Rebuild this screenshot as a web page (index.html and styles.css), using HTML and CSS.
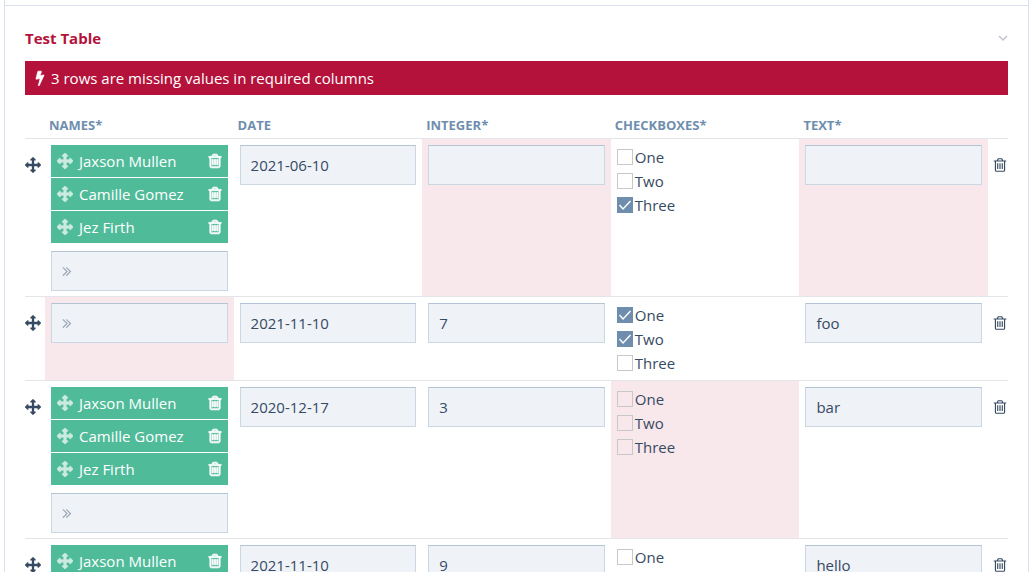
FILE: index.html
```html
<!DOCTYPE html>
<html lang="en">
<head>
    <meta charset="UTF-8">
    <meta name="viewport" content="width=device-width, initial-scale=1.0">
    <title>Test Table</title>
    <link rel="stylesheet" href="styles.css">
</head>
<body>
    <!-- Icon sprite -->
    <svg class="sprite" aria-hidden="true">
        <symbol id="move" viewBox="0 0 1792 1792"><path d="M1792 896q0 26-19 45l-256 256q-19 19-45 19t-45-19-19-45v-128h-384v384h128q26 0 45 19t19 45-19 45l-256 256q-19 19-45 19t-45-19l-256-256q-19-19-19-45t19-45 45-19h128v-384h-384v128q0 26-19 45t-45 19-45-19l-256-256q-19-19-19-45t19-45l256-256q19-19 45-19t45 19 19 45v128h384v-384h-128q-26 0-45-19t-19-45 19-45l256-256q19-19 45-19t45 19l256 256q19 19 19 45t-19 45-45 19h-128v384h384v-128q0-26 19-45t45-19 45 19l256 256q19 19 19 45z"/></symbol>
        <symbol id="trash" viewBox="0 0 1792 1792"><path d="M704 736v576q0 14-9 23t-23 9h-64q-14 0-23-9t-9-23v-576q0-14 9-23t23-9h64q14 0 23 9t9 23zm256 0v576q0 14-9 23t-23 9h-64q-14 0-23-9t-9-23v-576q0-14 9-23t23-9h64q14 0 23 9t9 23zm256 0v576q0 14-9 23t-23 9h-64q-14 0-23-9t-9-23v-576q0-14 9-23t23-9h64q14 0 23 9t9 23zm128 724v-948h-896v948q0 22 7 40.5t14.5 27 10.5 8.5h832q3 0 10.5-8.5t14.5-27 7-40.5zm-672-1076h448l-48-117q-7-9-17-11h-317q-10 2-17 11zm928 32v64q0 14-9 23t-23 9h-96v948q0 83-47 143.5t-113 60.5h-832q-66 0-113-58.5t-47-141.5v-952h-96q-14 0-23-9t-9-23v-64q0-14 9-23t23-9h309l70-167q15-37 54-63t79-26h320q40 0 79 26t54 63l70 167h309q14 0 23 9t9 23z"/></symbol>
        <symbol id="bolt" viewBox="0 0 1792 1792"><path d="M1333 566q18 20 7 44l-540 1157q-13 25-42 25-4 0-14-2-17-5-25.5-19t-4.5-30l197-808-406 101q-4 1-12 1-18 0-31-11-18-15-13-39l201-825q4-14 16-23t28-9h328q19 0 32 12.5t13 29.5q0 8-5 18l-171 463 396-98q8-2 12-2 19 0 34 15z"/></symbol>
        <symbol id="more" viewBox="0 0 1792 1792"><path d="M979 960q0 13-10 23l-466 466q-10 10-23 10t-23-10l-50-50q-10-10-10-23t10-23l393-393-393-393q-10-10-10-23t10-23l50-50q10-10 23-10t23 10l466 466q10 10 10 23zm384 0q0 13-10 23l-466 466q-10 10-23 10t-23-10l-50-50q-10-10-10-23t10-23l393-393-393-393q-10-10-10-23t10-23l50-50q10-10 23-10t23 10l466 466q10 10 10 23z"/></symbol>
        <symbol id="chevron" viewBox="0 0 10 10"><path d="M1 3l4 4 4-4" fill="none" stroke="currentColor" stroke-width="1.5"/></symbol>
    </svg>

    <main class="page">
        <section class="panel">
            <div class="panel-header">
                <h2>Test Table</h2>
                <button class="icon-btn toggle" type="button" aria-label="Collapse"><svg class="icon-small"><use href="#chevron"/></svg></button>
            </div>

            <div class="alert" role="alert">
                <svg class="icon"><use href="#bolt"/></svg>
                <span>3 rows are missing values in required columns</span>
            </div>

            <table class="grid">
                <thead>
                    <tr>
                        <th class="tool"></th>
                        <th>Names*</th>
                        <th>Date</th>
                        <th>Integer*</th>
                        <th>Checkboxes*</th>
                        <th>Text*</th>
                        <th class="tool"></th>
                    </tr>
                </thead>
                <tbody>
                    <tr>
                        <td class="tool"><button class="icon-btn" type="button" aria-label="Move row"><svg class="icon"><use href="#move"/></svg></button></td>
                        <td>
                            <ul class="chips">
                                <li><svg class="icon grip"><use href="#move"/></svg><span>Jaxson Mullen</span><button class="icon-btn" type="button" aria-label="Remove Jaxson Mullen"><svg class="icon"><use href="#trash"/></svg></button></li>
                                <li><svg class="icon grip"><use href="#move"/></svg><span>Camille Gomez</span><button class="icon-btn" type="button" aria-label="Remove Camille Gomez"><svg class="icon"><use href="#trash"/></svg></button></li>
                                <li><svg class="icon grip"><use href="#move"/></svg><span>Jez Firth</span><button class="icon-btn" type="button" aria-label="Remove Jez Firth"><svg class="icon"><use href="#trash"/></svg></button></li>
                            </ul>
                            <div class="lookup"><input class="field" type="text" aria-label="Add name"><svg class="icon"><use href="#more"/></svg></div>
                        </td>
                        <td><input class="field" type="text" value="2021-06-10" aria-label="Date"></td>
                        <td class="missing"><input class="field" type="text" aria-label="Integer"></td>
                        <td>
                            <label class="check"><input type="checkbox">One</label>
                            <label class="check"><input type="checkbox">Two</label>
                            <label class="check"><input type="checkbox" checked>Three</label>
                        </td>
                        <td class="missing"><input class="field" type="text" aria-label="Text"></td>
                        <td class="tool last"><button class="icon-btn" type="button" aria-label="Delete row"><svg class="icon"><use href="#trash"/></svg></button></td>
                    </tr>
                    <tr>
                        <td class="tool"><button class="icon-btn" type="button" aria-label="Move row"><svg class="icon"><use href="#move"/></svg></button></td>
                        <td class="missing">
                            <div class="lookup"><input class="field" type="text" aria-label="Add name"><svg class="icon"><use href="#more"/></svg></div>
                        </td>
                        <td><input class="field" type="text" value="2021-11-10" aria-label="Date"></td>
                        <td><input class="field" type="text" value="7" aria-label="Integer"></td>
                        <td>
                            <label class="check"><input type="checkbox" checked>One</label>
                            <label class="check"><input type="checkbox" checked>Two</label>
                            <label class="check"><input type="checkbox">Three</label>
                        </td>
                        <td><input class="field" type="text" value="foo" aria-label="Text"></td>
                        <td class="tool last"><button class="icon-btn" type="button" aria-label="Delete row"><svg class="icon"><use href="#trash"/></svg></button></td>
                    </tr>
                    <tr>
                        <td class="tool"><button class="icon-btn" type="button" aria-label="Move row"><svg class="icon"><use href="#move"/></svg></button></td>
                        <td>
                            <ul class="chips">
                                <li><svg class="icon grip"><use href="#move"/></svg><span>Jaxson Mullen</span><button class="icon-btn" type="button" aria-label="Remove Jaxson Mullen"><svg class="icon"><use href="#trash"/></svg></button></li>
                                <li><svg class="icon grip"><use href="#move"/></svg><span>Camille Gomez</span><button class="icon-btn" type="button" aria-label="Remove Camille Gomez"><svg class="icon"><use href="#trash"/></svg></button></li>
                                <li><svg class="icon grip"><use href="#move"/></svg><span>Jez Firth</span><button class="icon-btn" type="button" aria-label="Remove Jez Firth"><svg class="icon"><use href="#trash"/></svg></button></li>
                            </ul>
                            <div class="lookup"><input class="field" type="text" aria-label="Add name"><svg class="icon"><use href="#more"/></svg></div>
                        </td>
                        <td><input class="field" type="text" value="2020-12-17" aria-label="Date"></td>
                        <td><input class="field" type="text" value="3" aria-label="Integer"></td>
                        <td class="missing">
                            <label class="check"><input type="checkbox">One</label>
                            <label class="check"><input type="checkbox">Two</label>
                            <label class="check"><input type="checkbox">Three</label>
                        </td>
                        <td><input class="field" type="text" value="bar" aria-label="Text"></td>
                        <td class="tool last"><button class="icon-btn" type="button" aria-label="Delete row"><svg class="icon"><use href="#trash"/></svg></button></td>
                    </tr>
                    <tr>
                        <td class="tool"><button class="icon-btn" type="button" aria-label="Move row"><svg class="icon"><use href="#move"/></svg></button></td>
                        <td>
                            <ul class="chips">
                                <li><svg class="icon grip"><use href="#move"/></svg><span>Jaxson Mullen</span><button class="icon-btn" type="button" aria-label="Remove Jaxson Mullen"><svg class="icon"><use href="#trash"/></svg></button></li>
                            </ul>
                        </td>
                        <td><input class="field" type="text" value="2021-11-10" aria-label="Date"></td>
                        <td><input class="field" type="text" value="9" aria-label="Integer"></td>
                        <td>
                            <label class="check"><input type="checkbox">One</label>
                        </td>
                        <td><input class="field" type="text" value="hello" aria-label="Text"></td>
                        <td class="tool last"><button class="icon-btn" type="button" aria-label="Delete row"><svg class="icon"><use href="#trash"/></svg></button></td>
                    </tr>
                </tbody>
            </table>
        </section>
    </main>
</body>
</html>
```
FILE: styles.css
```css
* {
    margin: 0;
    padding: 0;
    box-sizing: border-box;
}

body {
    font-family: "Open Sans", "Noto Sans", sans-serif;
    font-size: 15px;
    line-height: 24px;
    color: #364a63;
    background: white;
}

.sprite {
    display: none;
}

.page {
    height: 100vh;
    overflow: hidden;
    margin: 0 4px;
    padding-top: 5px;
    border-left: 1px solid #dbe0ee;
    border-right: 1px solid #dbe0ee;
}

.panel {
    border-top: 1px solid #dbe0ee;
    padding: 20px;
}

.panel-header {
    display: flex;
    align-items: center;
    justify-content: space-between;
    margin-bottom: 11px;
}

.panel-header h2 {
    font-size: 15px;
    font-weight: 700;
    color: #b5123b;
}

.icon-btn {
    display: block;
    border: none;
    background: none;
    color: inherit;
    cursor: pointer;
}

.icon {
    display: block;
    flex: none;
    width: 16px;
    height: 16px;
    fill: currentColor;
}

.icon-small {
    display: block;
    width: 10px;
    height: 10px;
}

.toggle {
    color: #c0c4cc;
}

.alert {
    display: flex;
    align-items: center;
    gap: 3px;
    padding: 5px 7px;
    background: #b5123b;
    color: white;
}

.alert .icon {
    stroke: currentColor;
    stroke-width: 80px;
}

.grid {
    width: 100%;
    margin-top: 15px;
    table-layout: fixed;
    border-collapse: separate;
    border-spacing: 0;
}

.grid th {
    padding: 3px 4px 1px;
    font-size: 13px;
    font-weight: 700;
    text-align: left;
    text-transform: uppercase;
    color: #6f8eae;
}

.grid td {
    padding: 6px 6px 5px;
    border-top: 1px solid #e3e5e8;
    vertical-align: top;
}

.grid .tool {
    width: 20px;
    padding: 18px 0 0;
}

.grid th.tool {
    padding: 0;
}

.grid .last {
    padding-left: 4px;
}

.grid .missing {
    background: #f8e7eb;
}

.field {
    display: block;
    width: 100%;
    height: 40px;
    padding: 0 10px;
    border: 1px solid #cbd7e2;
    border-top-color: #b3c5d4;
    background: #eff3f8;
    color: inherit;
    font: inherit;
}

.chips {
    display: grid;
    gap: 1px;
    list-style: none;
}

.chips li {
    display: flex;
    align-items: center;
    gap: 6px;
    height: 32px;
    padding: 0 5px 0 6px;
    background: #50bb99;
    color: white;
}

.chips span {
    flex: 1;
}

.chips .icon {
    stroke: currentColor;
    stroke-width: 90px;
}

.chips .grip {
    opacity: 0.7;
}

.chips + .lookup {
    margin-top: 8px;
}

.lookup {
    position: relative;
}

.lookup .icon {
    position: absolute;
    top: 12px;
    left: 8px;
    color: #9da8b5;
    pointer-events: none;
}

.check {
    display: flex;
    align-items: center;
    gap: 2px;
}

.check input {
    appearance: none;
    width: 16px;
    height: 16px;
    border: 1px solid #c8c8c8;
}

.check input:checked {
    border-color: #6f8eae;
    background: #6f8eae url("data:image/svg+xml,%3Csvg xmlns='http://www.w3.org/2000/svg' viewBox='0 0 14 14'%3E%3Cpath d='M1.5 7l3.5 4 7.5-8' fill='none' stroke='white' stroke-width='1.4'/%3E%3C/svg%3E");
}
```
